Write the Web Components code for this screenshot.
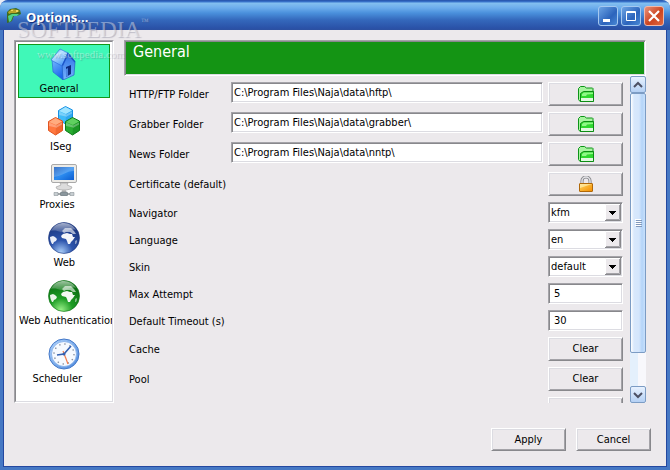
<!DOCTYPE html>
<html lang="en">
<head>
<meta charset="utf-8">
<title>Options...</title>
<style>
  html, body {
    height: 100%;
    margin: 0;
  }
  body {
    background: #e9ecf5;
    color: #000;
    font: 11px/14px "DejaVu Sans Condensed", Tahoma, sans-serif;
    --face: #ece9ec;
    --light: #fff;
    --soft: #dcdce2;
    --shade: #88888c;
    --mid: #a4a3a8;
  }
</style>
</head>
<body>

<xp-window title-text="Options...">
  <nav-list slot="side">
    <nav-item icon="house" label="General" selected></nav-item>
    <nav-item icon="cubes" label="ISeg"></nav-item>
    <nav-item icon="monitor" label="Proxies"></nav-item>
    <nav-item icon="globe" label="Web"></nav-item>
    <nav-item icon="greenglobe" label="Web Authentication"></nav-item>
    <nav-item icon="clock" label="Scheduler"></nav-item>
  </nav-list>
  <options-panel heading="General">
    <option-row type="folder" label="HTTP/FTP Folder" value="C:\Program Files\Naja\data\hftp\"></option-row>
    <option-row type="folder" label="Grabber Folder" value="C:\Program Files\Naja\data\grabber\"></option-row>
    <option-row type="folder" label="News Folder" value="C:\Program Files\Naja\data\nntp\"></option-row>
    <option-row type="lock" label="Certificate (default)"></option-row>
    <option-row type="select" label="Navigator" value="kfm"></option-row>
    <option-row type="select" label="Language" value="en"></option-row>
    <option-row type="select" label="Skin" value="default"></option-row>
    <option-row type="text" label="Max Attempt" value="5"></option-row>
    <option-row type="text" label="Default Timeout (s)" value="30"></option-row>
    <option-row type="button" label="Cache" value="Clear"></option-row>
    <option-row type="button" label="Pool" value="Clear"></option-row>
    <option-row type="button" label="" value=""></option-row>
  </options-panel>
  <xp-button slot="actions">Apply</xp-button>
  <xp-button slot="actions">Cancel</xp-button>
</xp-window>
<water-mark></water-mark>

<script>
const globe = (light, mid, dark) => `
  <defs><radialGradient id="g" cx=".4" cy=".95" r=".85">
    <stop offset="0" stop-color="${light}"/><stop offset=".45" stop-color="${mid}"/><stop offset="1" stop-color="${dark}"/>
  </radialGradient>
  <linearGradient id="s" x1="0" y1="0" x2="0" y2="1"><stop offset="0" stop-color="#fff" stop-opacity=".6"/><stop offset="1" stop-color="#fff" stop-opacity=".15"/></linearGradient></defs>
  <circle cx="16" cy="16" r="15.500" fill="url(#g)" stroke="${dark}" stroke-width=".6"/>
  <path fill="#fff" fill-opacity=".9" d="M2 15l3-1 2 1 2 2-1 2-2 1-1 2-1 0c-1-2-2-4-2-7z"/>
  <path fill="#fff" fill-opacity=".95" d="M13 14l2-2 4-1 3 1 2 0 1 3 2 0-2 3-2 2-1 2-2 0-1-3-1-2-4-1z"/>
  <path fill="#fff" fill-opacity=".6" d="M14 9l3-3 3 0 3 0 3 3 2 3-3 0-3-2-4 0-2 1z"/>
  <path fill="#fff" fill-opacity=".45" d="M27 19l2-1 0 2-1 2-1 0z"/>
  <path fill="url(#s)" d="M3 9C6 3 11 1 16 1s10 3 12 7c-6-2-9 3-15 2-4-1-6-2-10-1z"/>`;

const cube = (x, y, top, left, right) => `
  <g transform="translate(${x} ${y})">
    <path fill="${left}" stroke="${right}" stroke-width="1" stroke-linejoin="round" d="M7.500.5L14.500 4V13.500L7.500 18 .5 13.500V4.500z"/>
    <path fill="${top}" d="M7.500 1L14 4.500 8 8 1 5z"/>
    <path fill="${right}" fill-opacity=".45" d="M8 8l6.500-3.500V13.500l-7 4.500z"/>
    <path fill="#fff" fill-opacity=".3" d="M1 5.500L8 8.500v2L1 9zM8 8.500l6-3v2L8 11z"/>
  </g>`;

const icons = {
  house: `<defs><linearGradient id="a" x1="0" y1="0" x2=".4" y2="1"><stop offset="0" stop-color="#78bcff"/><stop offset="1" stop-color="#1c68ec"/></linearGradient>
    <linearGradient id="b" x1="0" y1="0" x2="0" y2="1"><stop offset="0" stop-color="#2c70e4"/><stop offset="1" stop-color="#78b4ff"/></linearGradient>
    <linearGradient id="c" x1="0" y1="0" x2=".6" y2="1"><stop offset="0" stop-color="#3c94f4"/><stop offset=".4" stop-color="#bce4ff"/><stop offset="1" stop-color="#4898f8"/></linearGradient></defs>
    <path fill="url(#b)" stroke="#1c50c0" stroke-width=".6" stroke-linejoin="round" d="M20 5l7 9-1 13-11 5-1-15z"/>
    <path fill="url(#a)" stroke="#2460d0" stroke-width=".6" stroke-linejoin="round" d="M4 11l10 6 1 15-10-8z"/>
    <path fill="url(#c)" stroke="#2468dc" stroke-width=".6" stroke-linejoin="round" d="M12 1l8 4-6 13-11-6z"/>
    <path fill="none" stroke="#1c54c8" stroke-width="1.400" d="M14.500 17.500L20 5.500l7 8.500"/>
    <path fill="#0c2c80" d="M18 19l5-2v9l-5 3z"/>
    <path fill="#4c84e0" d="M18 21l2-1v8l-2 1z"/>`,
  cubes: cube(10, 0, '#a0e4ff', '#40bcf8', '#1890e4') + cube(0, 11, '#ffac80', '#ff7840', '#e05420') + cube(17, 11, '#60d060', '#28ac30', '#0c7c18'),
  monitor: `<defs><linearGradient id="a" x1="0" y1="0" x2="1" y2="1"><stop offset="0" stop-color="#0a50b8"/><stop offset=".5" stop-color="#2c8cf0"/><stop offset="1" stop-color="#0c5cd0"/></linearGradient></defs>
    <rect x="3.500" y=".5" width="25" height="18" rx="1.500" fill="#ecebe7" stroke="#a9a9a9"/>
    <rect x="6" y="3" width="20" height="13" fill="url(#a)"/>
    <path fill="#fff" fill-opacity=".2" d="M6 3h20v4c-8 0-12 5-20 6z"/>
    <path fill="#dcdcdc" stroke="#999" stroke-width=".6" d="M12 19h8l-1 2 5 2-1 2-5 1h-4l-5-1-1-2 5-2z"/>
    <path fill="#bbb" d="M14 26h4v2h-4z"/>
    <path fill="none" stroke="#a3a8ab" stroke-width="2" d="M6 30h20"/>
    <rect x="12.500" y="28" width="7" height="4" rx="1" fill="#8b979d" stroke="#6c777c" stroke-width=".6"/>
    <path fill="#c7ced1" stroke="#7c878c" stroke-width=".5" d="M6 28.500h4v3h-4zM22 28.500h4v3h-4z"/>`,
  globe: globe('#a8ccf8', '#2c54ac', '#1c3880'),
  greenglobe: globe('#98f088', '#1c9c24', '#0c7014'),
  clock: `<defs><linearGradient id="a" x1="0" y1="0" x2="1" y2="1"><stop offset="0" stop-color="#b0d4fc"/><stop offset="1" stop-color="#4c88dc"/></linearGradient></defs>
    <circle cx="16" cy="16" r="15" fill="url(#a)" stroke="#4478c8"/>
    <circle cx="16" cy="16" r="12.500" fill="#f6faff" stroke="#80ace8" stroke-width=".8"/>
    <circle cx="16" cy="16" r="10" fill="none" stroke="#8890a0" stroke-width="1.400" stroke-dasharray="1.400 3.836"/>
    <path fill="none" stroke="#3460b0" stroke-width="1.600" d="M9 17l7-1 7-8"/>
    <path fill="none" stroke="#f47c4c" stroke-width="1.200" d="M15 13l5 13"/>
    <circle cx="16" cy="16" r="1.500" fill="#3460b0"/>`,
  lizard: `<path fill="#3c6c20" d="M1 4l3-3 6-1 4 2 1 4-4 2-3 0-1 2-1 3-2 1-3 1 0-7z"/>
    <path fill="#b8a428" d="M2 4l4-3 6 1 2 1-4 2-5 0-2 1z"/>
    <path fill="#50d088" d="M2 8l4-2 4 0 3 0-2 2-4 0-2 5-2 1z"/>
    <path fill="#f0d860" d="M10 2h2v2h-2zM5 2h2v1h-2z"/>`,
  folder: `<path fill="#a8f4a0" stroke="#0c9418" d="M.5 13.500v-11l2-2h4l2 1.500h6l.5.5V15.500H2z"/>
    <path fill="#30d830" stroke="#0c8c14" d="M2.500 15.500V7.500l3-2h10v10z"/>
    <path fill="#90f888" d="M4 8l2-1.500h9V8l-6 .5-1 1.500H4z"/>
    <path fill="#fff" d="M3 12h12v3H3z" fill-opacity=".85"/>`,
  lock: `<defs><linearGradient id="a" x1="0" y1="0" x2="1" y2="1"><stop offset="0" stop-color="#ffd860"/><stop offset="1" stop-color="#f48c00"/></linearGradient></defs>
    <path fill="none" stroke="#8c8c90" stroke-width="3.200" d="M4 8V5a4 4 0 0 1 8 0v3"/>
    <path fill="none" stroke="#e4e4e8" stroke-width="1.400" d="M4 8V5a4 4 0 0 1 8 0v3"/>
    <rect x="1.500" y="7.500" width="13" height="8" rx=".5" fill="url(#a)" stroke="#b06808"/>
    <path fill="#fff0b0" fill-opacity=".7" d="M2 8h12l-12 4z"/>`
};

const svg = (name, size) => `<svg width="${size}" height="${size}" viewBox="0 0 ${size} ${size}" aria-hidden="true">${icons[name]}</svg>`;

const buttonStyle = `
  button.face {
    display: grid;
    place-items: center;
    width: 75px;
    padding: 0;
    font: inherit;
    color: inherit;
    background: var(--face);
    border: 1px solid;
    border-color: var(--light) var(--shade) var(--shade) var(--light);
    box-shadow: inset 1px 1px var(--soft), inset -1px -1px var(--mid);
  }`;

class XpWindow extends HTMLElement {
  constructor() {
    super();
    this.attachShadow({ mode: 'open' });
  }

  connectedCallback() {
    const title = this.getAttribute('title-text');
    this.shadowRoot.innerHTML = `
      <style>
        :host {
          display: flex;
          flex-direction: column;
          box-sizing: border-box;
          height: 100vh;
          border-radius: 8px 8px 0 0;
          overflow: hidden;
          background: #4678c4;
        }
        header {
          display: flex;
          align-items: center;
          gap: 3px;
          height: 30px;
          box-sizing: border-box;
          padding: 2px 6px 0;
          border-radius: 8px 8px 0 0;
          background: linear-gradient(#2450a8 0, #3c78d0 2px, #84c0f0 3px, #6cacec 8px, #4a90dc 13px, #3468bc 20px, #2a52a8 28px, #2c50a0 30px);
        }
        h1 {
          flex: 1;
          margin: 0;
          padding: 2px 0 0 1px;
          color: #fff;
          font: bold 13px/18px "Open Sans", sans-serif;
          text-shadow: 1px 1px #14307c;
        }
        header svg { display: block; }
        header button {
          display: grid;
          place-items: center;
          width: 20px;
          height: 20px;
          padding: 0;
          border: 1px solid #a4c8f0;
          border-radius: 3px;
          background: linear-gradient(135deg, #6ca4e4, #2c64bc 60%, #4888d4);
        }
        header button.close {
          border-color: #f0b8a8;
          background: linear-gradient(135deg, #e89078, #cc4420 55%, #e06840);
        }
        .client {
          flex: 1;
          min-height: 0;
          display: flex;
          flex-direction: column;
          gap: 25px;
          margin: 0 3px 3px;
          padding: 10px 15px 15px 10px;
          border: 1px solid #2448a0;
          border-top: 0;
          background: var(--face);
        }
        .main {
          flex: 1;
          min-height: 0;
          display: grid;
          grid-template-columns: 100px 1fr;
          grid-template-rows: minmax(0, 1fr);
          gap: 10px;
          padding-right: 5px;
        }
        footer {
          display: flex;
          justify-content: flex-end;
          gap: 10px;
        }
      </style>
      <header>
        ${svg('lizard', 16)}
        <h1>${title}</h1>
        <button type="button" aria-label="Minimize"><svg width="14" height="14"><path fill="#fff" d="M2 10h7v3H2z"/></svg></button>
        <button type="button" aria-label="Maximize"><svg width="14" height="14"><path fill="none" stroke="#fff" d="M2.500 2.500h9v9h-9zM2 3.500h10"/></svg></button>
        <button type="button" class="close" aria-label="Close"><svg width="14" height="14"><path stroke="#fff" stroke-width="2.200" d="M2 2l10 10M12 2L2 12"/></svg></button>
      </header>
      <div class="client">
        <div class="main">
          <slot name="side"></slot>
          <slot></slot>
        </div>
        <footer><slot name="actions"></slot></footer>
      </div>`;
  }
}

class NavList extends HTMLElement {
  constructor() {
    super();
    this.attachShadow({ mode: 'open' }).innerHTML = `
      <style>
        :host {
          display: block;
          border: 1px solid;
          border-color: var(--mid) var(--light) var(--light) var(--mid);
          background: #fff;
        }
        nav {
          display: flex;
          flex-direction: column;
          gap: 4px;
          height: 100%;
          box-sizing: border-box;
          padding: 2px;
          border: 1px solid;
          border-color: var(--shade) var(--soft) var(--soft) var(--shade);
          overflow: hidden;
        }
      </style>
      <nav><slot></slot></nav>`;
  }
}

class NavItem extends HTMLElement {
  constructor() {
    super();
    this.attachShadow({ mode: 'open' });
  }

  connectedCallback() {
    const label = this.getAttribute('label');
    this.shadowRoot.innerHTML = `
      <style>
        :host { display: block; }
        button {
          display: flex;
          flex-direction: column;
          align-items: center;
          gap: 2px;
          width: 100%;
          height: 54px;
          padding: 3px 0 0;
          border: 1px solid transparent;
          background: none;
          font: inherit;
          color: inherit;
        }
        :host([selected]) button {
          border-color: #109818;
          background: #40f8b8;
        }
        svg { flex: none; }
        /* the caption box is sized by its letter count, text starts at its left */
        span {
          width: calc(var(--letters) * 7px);
          max-width: 100%;
          text-align: left;
          white-space: nowrap;
        }
      </style>
      <button type="button" style="--letters: ${label.length}">
        ${svg(this.getAttribute('icon'), 32)}
        <span>${label}</span>
      </button>`;
  }
}

class ScrollStrip extends HTMLElement {
  constructor() {
    super();
    this.attachShadow({ mode: 'open' }).innerHTML = `
      <style>
        :host {
          display: flex;
          flex-direction: column;
          width: 16px;
          background: linear-gradient(90deg, #e4f0fc 50%, #f8f8fc 50%);
        }
        button {
          display: grid;
          place-items: center;
          box-sizing: border-box;
          height: 17px;
          padding: 0;
          border: 1px solid #7c9cc4;
          border-radius: 2px;
          background: linear-gradient(#e8f2ff, #b4d0f4);
        }
        .track {
          flex: 1;
          display: grid;
          grid-template-rows: 260fr 33fr;
        }
        .thumb {
          display: grid;
          place-items: center;
          border: 1px solid #7c9cc4;
          border-radius: 2px;
          background: linear-gradient(90deg, #fff 0, #d8e8fc 3px, #d4e6fc 8px, #b4d4f8 11px, #c8e0fc);
        }
      </style>
      <button type="button" aria-label="Scroll up"><svg width="10" height="8"><path fill="none" stroke="#4c5064" stroke-width="2" d="M1 6l4-4 4 4"/></svg></button>
      <div class="track"><div class="thumb">
        <svg width="7" height="8"><path stroke="#fff" d="M0 .5h6M0 2.500h6M0 4.500h6M0 6.500h6"/><path stroke="#8098bc" d="M1 1.500h6M1 3.500h6M1 5.500h6M1 7.500h6"/></svg>
      </div></div>
      <button type="button" aria-label="Scroll down"><svg width="10" height="8"><path fill="none" stroke="#4c5064" stroke-width="2" d="M1 2l4 4 4-4"/></svg></button>`;
  }
}

class OptionsPanel extends HTMLElement {
  constructor() {
    super();
    this.attachShadow({ mode: 'open' });
  }

  connectedCallback() {
    this.shadowRoot.innerHTML = `
      <style>
        :host {
          display: flex;
          flex-direction: column;
          min-height: 0;
        }
        h2 {
          flex: none;
          box-sizing: border-box;
          height: 36px;
          margin: 0;
          padding: 0 8px;
          border: 1px solid;
          border-color: var(--mid) var(--light) var(--light) var(--mid);
          background: #149414;
          box-shadow: inset 1px 1px var(--shade), inset -1px -1px var(--soft);
          color: #fff;
          font-size: 16px;
          line-height: 22px;
          font-weight: normal;
        }
        .body {
          flex: 1;
          min-height: 0;
          display: grid;
          grid-template-columns: 1fr 16px;
          grid-template-rows: minmax(0, 1fr);
          gap: 7px;
        }
        .rows {
          display: flex;
          flex-direction: column;
          gap: 6px;
          padding: 6px 0 0 5px;
          overflow: hidden;
        }
      </style>
      <h2>${this.getAttribute('heading')}</h2>
      <div class="body">
        <div class="rows"><slot></slot></div>
        <scroll-strip></scroll-strip>
      </div>`;
  }
}

class OptionRow extends HTMLElement {
  constructor() {
    super();
    this.attachShadow({ mode: 'open' });
  }

  connectedCallback() {
    const type = this.getAttribute('type');
    const value = this.getAttribute('value') || '';
    this.shadowRoot.innerHTML = `
      <style>
        :host {
          flex: none;
          display: block;
        }
        ${buttonStyle}
        button.face { height: 24px; }
        .row {
          display: flex;
          gap: 5px;
        }
        label {
          flex: 1;
          align-self: center;
          padding-top: 2px;
        }
        .folder label { flex: 0 0 97px; }
        input, select {
          box-sizing: border-box;
          width: 75px;
          height: 21px;
          margin: 0;
          padding: 0 5px;
          border: 1px solid;
          border-color: var(--mid) var(--light) var(--light) var(--mid);
          border-radius: 0;
          box-shadow: inset 1px 1px var(--shade), inset -1px -1px var(--soft);
          background: #fff;
          font: inherit;
          color: inherit;
          appearance: none;
        }
        .folder input {
          flex: 1;
          min-width: 0;
          padding: 0 2px;
        }
        select { padding: 0 2px; }
        .combo, .combo select, .combo svg { grid-area: 1 / 1; }
        .combo { display: grid; }
        .combo svg {
          justify-self: end;
          align-self: center;
          margin-right: 2px;
          pointer-events: none;
        }
      </style>
      <div class="row ${type}">
        <label for="control">${this.getAttribute('label')}</label>
        ${this._control(type, value)}
      </div>`;
  }

  _control(type, value) {
    switch (type) {
      case 'folder':
        return `<input id="control" type="text" value="${value}">
          <button class="face" type="button" aria-label="Browse">${svg('folder', 16)}</button>`;
      case 'lock':
        return `<button class="face" id="control" type="button">${svg('lock', 16)}</button>`;
      case 'select':
        return `<div class="combo"><select id="control"><option>${value}</option></select>
          <svg width="16" height="17"><path fill="#ece9ec" d="M0 0h16v17H0z"/><path fill="none" stroke="#fff" d="M.5 16V.5H15"/><path fill="none" stroke="#88888c" d="M15.500 0v16.500H0"/><path fill="none" stroke="#a4a3a8" d="M14.500 1v14.500H1"/><path d="M4 7h7v1h-1v1h-1v1h-1v1h-1v-1h-1v-1h-1v-1h-1z"/></svg></div>`;
      case 'text':
        return `<input id="control" type="text" value="${value}">`;
      default:
        return `<button class="face" id="control" type="button">${value}</button>`;
    }
  }
}

class XpButton extends HTMLElement {
  constructor() {
    super();
    this.attachShadow({ mode: 'open' }).innerHTML = `
      <style>
        :host { display: block; }
        ${buttonStyle}
        button.face { height: 23px; }
      </style>
      <button class="face" type="button"><slot></slot></button>`;
  }
}

class WaterMark extends HTMLElement {
  constructor() {
    super();
    this.attachShadow({ mode: 'open' }).innerHTML = `
      <style>
        :host {
          position: absolute;
          top: 17px;
          left: 17px;
          pointer-events: none;
          color: rgba(255, 255, 255, .4);
          text-shadow: 1px 1px 1px rgba(80, 80, 110, .3);
          font-family: "Liberation Serif", serif;
        }
        div {
          display: flex;
          font-size: 23px;
          line-height: 26px;
        }
        sup {
          font-size: 8px;
          line-height: 10px;
        }
        p {
          margin: 5px 0 0 20px;
          font-size: 11px;
          line-height: 12px;
        }
      </style>
      <div>SOFTPEDIA<sup>™</sup></div>
      <p>www.softpedia.com</p>`;
  }
}

customElements.define('xp-window', XpWindow);
customElements.define('nav-list', NavList);
customElements.define('nav-item', NavItem);
customElements.define('scroll-strip', ScrollStrip);
customElements.define('options-panel', OptionsPanel);
customElements.define('option-row', OptionRow);
customElements.define('xp-button', XpButton);
customElements.define('water-mark', WaterMark);
</script>
</body>
</html>
